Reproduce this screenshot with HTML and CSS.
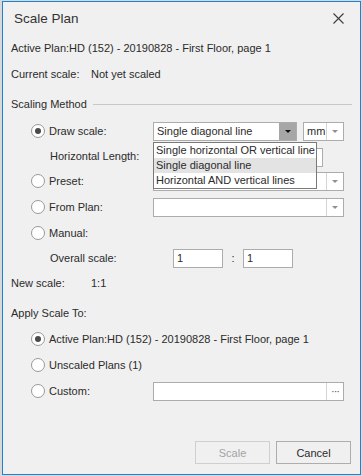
FILE: index.html
```html
<!DOCTYPE html>
<html lang="en">
<head>
    <meta charset="UTF-8">
    <title>Scale Plan</title>
    <link rel="stylesheet" href="styles.css">
</head>
<body>
    <div class="dialog">
        <div class="dialog-header">
            <div class="dialog-title">Scale Plan</div>
            <svg class="dialog-close" width="11" height="11" viewBox="0 0 11 11">
                <path d="M0.5 0.5 L10.5 10.5 M10.5 0.5 L0.5 10.5" stroke="#3c3c3c" stroke-width="1.1" fill="none"/>
            </svg>
        </div>

        <div class="dialog-body">
            <div class="info-row">Active Plan:HD (152) - 20190828 - First Floor, page 1</div>
            <div class="info-row">
                <span class="info-label">Current scale:</span>
                <span>Not yet scaled</span>
            </div>

            <div class="group-legend">
                <span>Scaling Method</span>
                <div class="group-line"></div>
            </div>

            <div class="form-row row-draw">
                <label class="radio-label"><span class="radio checked"></span>Draw scale:</label>
                <div class="field-pair">
                    <div class="combo combo-method open">
                        <div class="combo-text">Single diagonal line</div>
                        <div class="combo-btn pressed"><span class="arrow dark"></span></div>
                        <ul class="dropdown">
                            <li>Single horizontal OR vertical line</li>
                            <li class="hover">Single diagonal line</li>
                            <li>Horizontal AND vertical lines</li>
                        </ul>
                    </div>
                    <div class="combo combo-unit">
                        <div class="combo-text">mm</div>
                        <div class="combo-btn"><span class="arrow"></span></div>
                    </div>
                </div>
            </div>

            <div class="form-row row-length">
                <span class="sub-label">Horizontal Length:</span>
                <div class="textbox length-box"></div>
            </div>

            <div class="form-row row-preset">
                <label class="radio-label"><span class="radio"></span>Preset:</label>
                <div class="combo combo-wide">
                    <div class="combo-text"></div>
                    <div class="combo-btn"><span class="arrow"></span></div>
                </div>
            </div>

            <div class="form-row row-plan">
                <label class="radio-label"><span class="radio"></span>From Plan:</label>
                <div class="combo combo-wide">
                    <div class="combo-text"></div>
                    <div class="combo-btn"><span class="arrow"></span></div>
                </div>
            </div>

            <div class="form-row row-manual">
                <label class="radio-label"><span class="radio"></span>Manual:</label>
            </div>

            <div class="form-row row-overall">
                <span class="sub-label">Overall scale:</span>
                <div class="ratio">
                    <div class="textbox ratio-box">1</div>
                    <span class="ratio-sep">:</span>
                    <div class="textbox ratio-box">1</div>
                </div>
            </div>

            <div class="info-row row-new">
                <span class="info-label">New scale:</span>
                <span>1:1</span>
            </div>

            <div class="info-row row-apply">Apply Scale To:</div>

            <div class="form-row row-radio">
                <label class="radio-label"><span class="radio checked"></span>Active Plan:HD (152) - 20190828 - First Floor, page 1</label>
            </div>
            <div class="form-row row-radio">
                <label class="radio-label"><span class="radio"></span>Unscaled Plans (1)</label>
            </div>
            <div class="form-row row-custom">
                <label class="radio-label"><span class="radio"></span>Custom:</label>
                <div class="combo combo-wide">
                    <div class="combo-text"></div>
                    <div class="combo-btn dots">&middot;&middot;&middot;</div>
                </div>
            </div>
        </div>

        <div class="dialog-footer">
            <button class="btn" disabled>Scale</button>
            <button class="btn">Cancel</button>
        </div>
    </div>
</body>
</html>
```

FILE: styles.css
```css
:root {
    --bg-color: #f0f0f0;
    --text-color: #2b2b2b;
    --border-color: #acacac;
    --accent-color: #1a83d6;
}

body {
    font-family: 'Liberation Sans', Arial, sans-serif;
    font-size: 11px;
    background-color: #d9d9d9;
    color: var(--text-color);
    margin: 0;
    padding: 1px 0 0 2px;
}

.dialog {
    width: 359px;
    height: 474px;
    box-sizing: border-box;
    background-color: var(--bg-color);
    border: 1px solid var(--accent-color);
    display: flex;
    flex-direction: column;
}

.dialog-header {
    height: 33px;
    display: flex;
    align-items: center;
    justify-content: space-between;
    padding: 0 16px 0 11px;
}

.dialog-title {
    font-size: 13.5px;
    color: #333;
}

.dialog-body {
    padding: 0 8px;
}

.info-row {
    height: 26px;
    display: flex;
    align-items: center;
}

.info-label {
    width: 80px;
}

.group-legend {
    height: 20px;
    margin-top: 7px;
    display: flex;
    align-items: center;
    gap: 6px;
}

.group-line {
    flex: 1;
    height: 1px;
    background-color: #c8c8c8;
}

.form-row {
    display: grid;
    grid-template-columns: 142px 191px;
    align-items: center;
    height: 26px;
}

.row-draw {
    margin-top: 4px;
}

.row-length {
    height: 24px;
}

.row-overall {
    height: 24px;
}

.radio-label {
    display: flex;
    align-items: center;
    gap: 4px;
    padding-left: 20px;
    white-space: nowrap;
}

.row-radio {
    grid-template-columns: 1fr;
}

.radio {
    width: 12px;
    height: 12px;
    border: 1px solid #999;
    border-radius: 50%;
    background-color: #fff;
    display: flex;
    align-items: center;
    justify-content: center;
}

.radio.checked::after {
    content: "";
    width: 6px;
    height: 6px;
    border-radius: 50%;
    background-color: #4a4a4a;
}

.sub-label {
    padding-left: 39px;
}

.field-pair {
    display: flex;
    gap: 6px;
}

.combo {
    position: relative;
    height: 19px;
    box-sizing: border-box;
    border: 1px solid var(--border-color);
    background-color: #fff;
    display: flex;
}

.combo-method {
    width: 144px;
}

.combo-unit {
    width: 41px;
}

.combo-wide {
    width: 191px;
}

.combo-text {
    flex: 1;
    padding-left: 3px;
    line-height: 17px;
}

.combo-btn {
    width: 16px;
    border-left: 1px solid #d4d4d4;
    display: flex;
    align-items: center;
    justify-content: center;
}

.combo-btn.pressed {
    background-color: #a6a6a6;
    border-left-color: #a6a6a6;
}

.combo-btn.dots {
    color: #555;
    font-size: 11px;
    letter-spacing: -1px;
}

.arrow {
    width: 0;
    height: 0;
    border-left: 3px solid transparent;
    border-right: 3px solid transparent;
    border-top: 3px solid #909090;
}

.arrow.dark {
    border-top-color: #111;
}

.dropdown {
    position: absolute;
    top: 19px;
    left: -1px;
    width: 164px;
    margin: 0;
    padding: 0;
    list-style: none;
    box-sizing: border-box;
    border: 1px solid #7a7a7a;
    background-color: #fff;
    z-index: 2;
}

.dropdown li {
    height: 15px;
    line-height: 15px;
    padding-left: 2px;
    white-space: nowrap;
}

.dropdown li.hover {
    background-color: #e3e3e3;
}

.textbox {
    height: 19px;
    box-sizing: border-box;
    border: 1px solid var(--border-color);
    background-color: #fff;
    padding-left: 3px;
    line-height: 17px;
}

.length-box {
    width: 170px;
    align-self: end;
    margin-bottom: 1px;
}

.ratio {
    display: flex;
    align-items: center;
    margin-left: 20px;
}

.ratio-box {
    width: 50px;
}

.ratio-sep {
    width: 20px;
    text-align: center;
}

.row-apply {
    margin-top: 4px;
}

.row-radio:first-of-type {
    margin-top: 2px;
}

.dialog-footer {
    margin-top: auto;
    display: flex;
    justify-content: flex-end;
    gap: 6px;
    padding: 0 9px 10px 0;
}

.btn {
    width: 75px;
    height: 23px;
    font-family: inherit;
    font-size: 11px;
    color: var(--text-color);
    background-color: #f0f0f0;
    border: 1px solid #adadad;
}

.btn:disabled {
    color: #a3a3a3;
    border-color: #cfcfcf;
}
```
